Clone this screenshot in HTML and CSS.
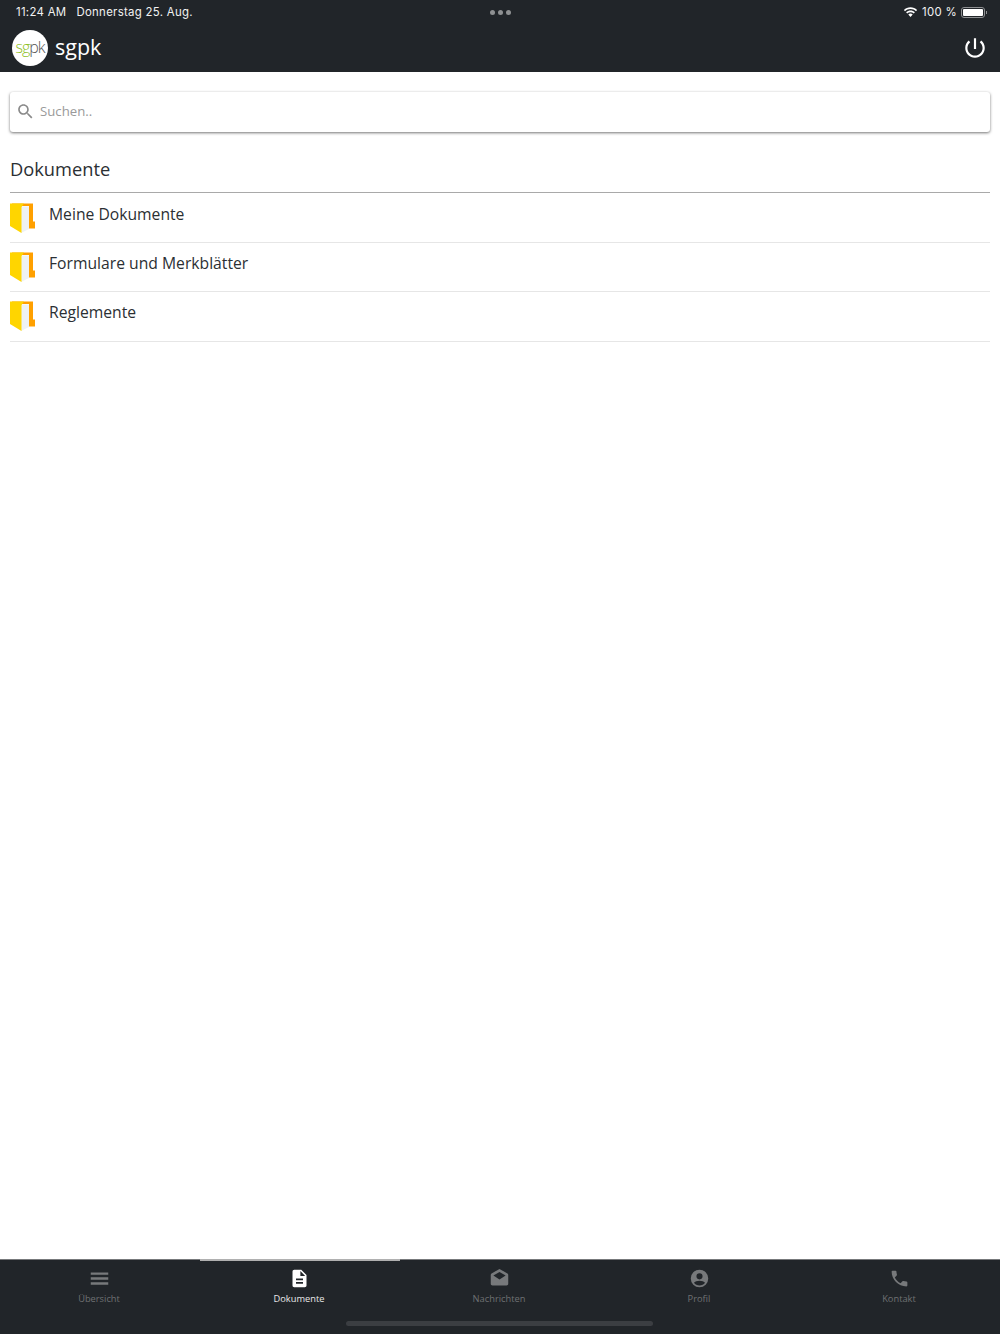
FILE: index.html
```html
<!DOCTYPE html>
<html lang="de">
<head>
  <meta charset="UTF-8" />
  <meta name="viewport" content="width=device-width, initial-scale=1" />
  <title>sgpk</title>
  <link rel="stylesheet" href="styles.css">
</head>
<body>
  <header>
    <div class="status-bar">
      <div class="status-left"><span>11:24 AM</span><span>Donnerstag 25. Aug.</span></div>
      <div class="status-dots"><i></i><i></i><i></i></div>
      <div class="status-right">
        <svg class="wifi" viewBox="0 0 16 12"><path d="M8 2.2c2.3 0 4.4.9 6 2.4l1.2-1.3C13.300 1.500 10.800.4 8 .4S2.700 1.500.8 3.300L2 4.600c1.600-1.500 3.700-2.400 6-2.400z"/><path d="M8 5.600c1.400 0 2.600.5 3.600 1.400l1.200-1.300C11.500 4.500 9.800 3.800 8 3.800s-3.500.7-4.800 1.900L4.400 7c1-.9 2.200-1.400 3.600-1.400z"/><path d="M8 7.200c-.9 0-1.700.3-2.400.9L8 10.800l2.400-2.700c-.7-.6-1.500-.9-2.400-.9z"/></svg>
        <span>100 %</span>
        <div class="battery"><div class="battery-level"></div></div>
      </div>
    </div>
    <div class="app-bar">
      <div class="logo"><span class="logo-sg">sg</span><span class="logo-pk">pk</span></div>
      <div class="app-title">sgpk</div>
      <svg class="power" viewBox="0 0 24 24"><path d="M13 3h-2v10h2V3zm4.830 2.170l-1.420 1.420C17.990 7.860 19 9.810 19 12c0 3.870-3.130 7-7 7s-7-3.130-7-7c0-2.190 1.010-4.140 2.580-5.420L6.170 5.170C4.230 6.820 3 9.260 3 12c0 4.970 4.030 9 9 9s9-4.030 9-9c0-2.740-1.230-5.180-3.170-6.830z"/></svg>
    </div>
  </header>

  <main>
    <div class="search">
      <svg viewBox="0 0 24 24"><path d="M15.500 14h-.79l-.28-.27C15.410 12.590 16 11.110 16 9.500 16 5.910 13.090 3 9.500 3S3 5.910 3 9.500 5.910 16 9.500 16c1.610 0 3.090-.59 4.230-1.570l.27.28v.79l5 4.990L20.490 19l-4.990-5zm-6 0C7.010 14 5 11.990 5 9.500S7.010 5 9.500 5 14 7.010 14 9.500 11.990 14 9.500 14z"/></svg>
      <span>Suchen..</span>
    </div>

    <h2>Dokumente</h2>
    <div class="folder-list">
      <div class="folder-item">
        <svg class="folder" viewBox="0 0 25 30"><path fill="#ffa000" d="M2 .5h21v18h2v7h-6V3H2z"/><path fill="#eef2f3" d="M11 3.500h8V26l-8 4z"/><path fill="#ffd500" d="M0 .5h14l-2.500 3.500V30L0 23z"/></svg>
        <span>Meine Dokumente</span>
      </div>
      <div class="folder-item">
        <svg class="folder" viewBox="0 0 25 30"><path fill="#ffa000" d="M2 .5h21v18h2v7h-6V3H2z"/><path fill="#eef2f3" d="M11 3.500h8V26l-8 4z"/><path fill="#ffd500" d="M0 .5h14l-2.500 3.500V30L0 23z"/></svg>
        <span>Formulare und Merkblätter</span>
      </div>
      <div class="folder-item">
        <svg class="folder" viewBox="0 0 25 30"><path fill="#ffa000" d="M2 .5h21v18h2v7h-6V3H2z"/><path fill="#eef2f3" d="M11 3.500h8V26l-8 4z"/><path fill="#ffd500" d="M0 .5h14l-2.500 3.500V30L0 23z"/></svg>
        <span>Reglemente</span>
      </div>
    </div>
  </main>

  <nav class="tab-bar">
    <div class="tab">
      <svg viewBox="0 0 24 24"><path d="M2 19h20v-2.700H2V19zm0-5.700h20v-2.600H2v2.600zM2 5v2.700h20V5H2z"/></svg>
      <span>Übersicht</span>
    </div>
    <div class="tab active">
      <svg viewBox="0 0 24 24"><path d="M14 2H6c-1.100 0-1.990.9-1.990 2L4 20c0 1.100.89 2 1.990 2H18c1.100 0 2-.9 2-2V8l-6-6zm2 16H8v-2h8v2zm0-4H8v-2h8v2zm-3-5V3.500L18.500 9H13z"/></svg>
      <span>Dokumente</span>
    </div>
    <div class="tab">
      <svg viewBox="0 0 24 24"><path d="M21.990 8c0-.72-.37-1.350-.94-1.700L12 1 2.950 6.300C2.380 6.650 2 7.280 2 8v10c0 1.100.9 2 2 2h16c1.100 0 2-.9 2-2l-.01-10zM12 13L5 8.500 12 4.500l7 4L12 13z"/></svg>
      <span>Nachrichten</span>
    </div>
    <div class="tab">
      <svg viewBox="0 0 24 24"><path fill-rule="evenodd" d="M12 2a10 10 0 1 0 0 20 10 10 0 0 0 0-20zm0 4a3.500 3.500 0 1 1 0 7 3.500 3.500 0 0 1 0-7zm0 14c-2.600 0-4.900-1.200-6.300-3.100C6.500 15.300 9.500 14.500 12 14.500s5.500.8 6.300 2.400C16.900 18.800 14.600 20 12 20z"/></svg>
      <span>Profil</span>
    </div>
    <div class="tab">
      <svg viewBox="0 0 24 24"><path d="M6.620 10.790c1.440 2.830 3.760 5.140 6.590 6.590l2.200-2.200c.27-.27.67-.36 1.020-.24 1.120.37 2.330.57 3.570.57.55 0 1 .45 1 1V20c0 .55-.45 1-1 1-9.390 0-17-7.610-17-17 0-.55.45-1 1-1h3.500c.55 0 1 .45 1 1 0 1.250.2 2.450.57 3.570.11.35.03.74-.25 1.020l-2.200 2.200z"/></svg>
      <span>Kontakt</span>
    </div>
    <div class="home-indicator"></div>
  </nav>
</body>
</html>
```

FILE: styles.css
```css
html, body {
  height: 100%;
}
body {
  font-family: 'Open Sans', 'Noto Sans', sans-serif;
  background: #fff;
  color: #2b2f33;
  margin: 0;
  display: flex;
  flex-direction: column;
  overflow: hidden;
}
header {
  background: #212529;
  color: #fff;
  height: 72px;
  flex-shrink: 0;
}
.status-bar {
  display: grid;
  grid-template-columns: 1fr auto 1fr;
  align-items: center;
  height: 24px;
  padding: 0 15px 0 16px;
  box-sizing: border-box;
  font-family: Inter, sans-serif;
  font-size: 11.400px;
  color: #f2f2f2;
}
.status-left {
  display: flex;
  gap: 10px;
  letter-spacing: 0.3px;
}
.status-dots {
  display: flex;
  gap: 3px;
}
.status-dots i {
  width: 5px;
  height: 5px;
  border-radius: 50%;
  background: #8e9092;
}
.status-right {
  display: flex;
  justify-content: flex-end;
  align-items: center;
  gap: 4px;
}
.status-right span {
  letter-spacing: 0.3px;
}
.wifi {
  width: 15px;
  height: 11px;
  fill: #fff;
}
.battery {
  width: 24px;
  height: 11px;
  border: 1px solid #8e9092;
  border-radius: 3px;
  padding: 1px;
  box-sizing: border-box;
  position: relative;
}
.battery::after {
  content: "";
  position: absolute;
  right: -3px;
  top: 3px;
  width: 1px;
  height: 3px;
  background: #8e9092;
}
.battery-level {
  background: #fff;
  height: 100%;
  border-radius: 1px;
}
.app-bar {
  display: flex;
  align-items: center;
  height: 48px;
  padding: 0 12px;
  box-sizing: border-box;
}
.logo {
  width: 36px;
  height: 36px;
  border-radius: 50%;
  background: #fff;
  display: flex;
  align-items: center;
  justify-content: center;
  font-size: 16px;
  font-weight: 300;
  letter-spacing: -1px;
  padding-bottom: 2px;
  box-sizing: border-box;
}
.logo-sg {
  color: #8fbf26;
}
.logo-pk {
  color: #555;
}
.app-title {
  font-size: 21.500px;
  margin-left: 7px;
  margin-top: -3px;
  flex: 1;
}
.power {
  width: 26px;
  height: 26px;
  fill: #fff;
  margin-top: -1px;
}
main {
  flex: 1;
  padding: 20px 10px 0;
}
.search {
  display: flex;
  align-items: center;
  height: 40px;
  background: #fff;
  border-radius: 3px;
  box-shadow: 0 1px 3px rgba(0, 0, 0, 0.55);
  padding: 0 7px 2px;
  box-sizing: border-box;
  color: #9a9a9a;
  font-size: 13.200px;
}
.search svg {
  width: 17px;
  height: 17px;
  fill: #8a8a8a;
  margin-right: 6px;
  transform: scale(1.15);
}
h2 {
  font-size: 18.300px;
  font-weight: 400;
  margin: 24px 0 0;
  height: 36px;
  line-height: 26px;
  border-bottom: 1px solid #a9a9a9;
}
.folder-list {
  padding-top: 0.7px;
}
.folder-item {
  display: flex;
  align-items: flex-start;
  height: 49.300px;
  padding-top: 9px;
  box-sizing: border-box;
  border-bottom: 1px solid #e6e6e6;
  font-size: 15.700px;
}
.folder-item span {
  margin-left: 14px;
  line-height: 23px;
}
.folder {
  width: 25px;
  height: 30px;
  flex-shrink: 0;
}
.tab-bar {
  position: relative;
  display: grid;
  grid-template-columns: repeat(5, 1fr);
  height: 75px;
  background: #212529;
  flex-shrink: 0;
  border-top: 1px solid #77797b;
  box-sizing: border-box;
  color: #6f7173;
  font-size: 9.300px;
}
.tab-bar::before {
  content: "";
  position: absolute;
  left: 200px;
  top: -1px;
  width: 200px;
  height: 2px;
  background: #b0b0b0;
}
.tab {
  display: flex;
  flex-direction: column;
  align-items: center;
  padding: 8px 2px 0 0;
  gap: 3px;
}
.tab svg {
  width: 21px;
  height: 21px;
  fill: #77797b;
}
.tab.active {
  color: #e8e8e8;
}
.tab.active svg {
  fill: #fff;
}
.home-indicator {
  position: absolute;
  left: 346px;
  bottom: 8px;
  width: 307px;
  height: 5px;
  border-radius: 3px;
  background: #3b3e42;
}
```
